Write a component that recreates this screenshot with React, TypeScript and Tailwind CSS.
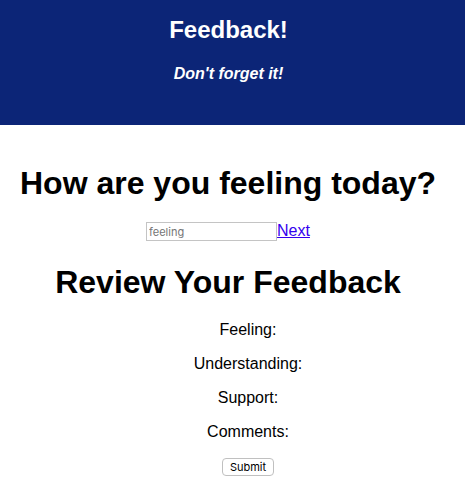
import React from "react";

const fields = ["Feeling:", "Understanding:", "Support:", "Comments:"];

export default function App() {
  return (
    <div className="min-h-screen bg-white text-center font-['Liberation_Sans',Arial,sans-serif] text-base text-black">
      <header className="h-[125px] bg-[#0c2577] pt-4 pr-2 text-white">
        <h1 className="text-2xl leading-7 font-bold">Feedback!</h1>
        <h4 className="mt-5 leading-5 font-bold italic">Don't forget it!</h4>
      </header>
      <main className="pr-[9px]">
        <section className="pt-10">
          <h1 className="text-[32px] leading-9 font-bold">
            <label htmlFor="feeling">How are you feeling today?</label>
          </h1>
          <form className="mt-5 flex items-end justify-center">
            <input
              id="feeling"
              type="text"
              placeholder="feeling"
              className="h-[19px] w-[131px] border border-[#c4c4c4] bg-white px-0.5 font-['Inter',sans-serif] text-[11px] placeholder:text-[#757575]"
            />
            <a href="#understanding" className="leading-5 text-[#3300ee] underline">
              Next
            </a>
          </form>
        </section>
        <section className="pt-[23px]">
          <h1 className="text-[32px] leading-9 font-bold">Review Your Feedback</h1>
          <ul className="mt-5 flex flex-col gap-3.5 pl-10">
            {fields.map((field) => (
              <li key={field} className="leading-5">
                {field}
              </li>
            ))}
            <li className="flex justify-center pt-0.5">
              <button
                type="submit"
                className="h-[18px] w-[52px] rounded border border-[#c0c0c0] bg-white font-['Inter',sans-serif] text-[11px] leading-4"
              >
                Submit
              </button>
            </li>
          </ul>
        </section>
      </main>
    </div>
  );
}
